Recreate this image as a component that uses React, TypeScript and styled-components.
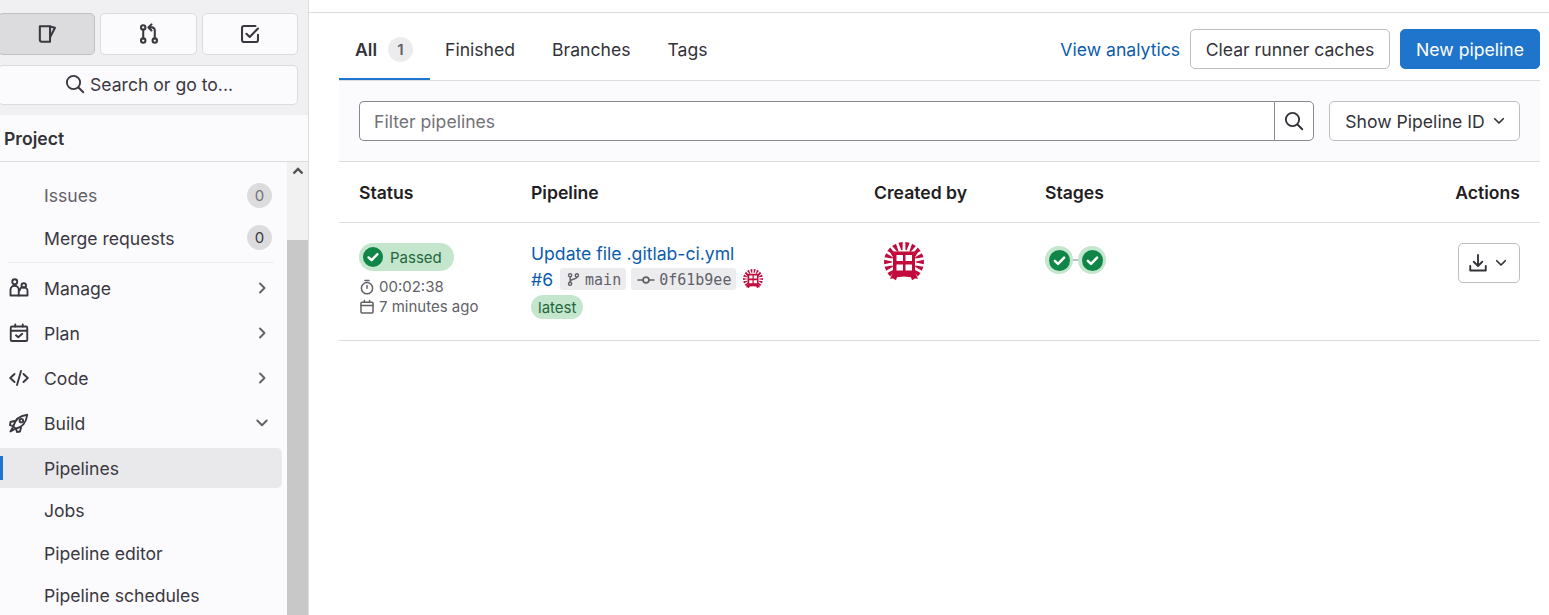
import React from "react";
import styled, { createGlobalStyle } from "styled-components";

const Global = createGlobalStyle`
  html, body { margin: 0; padding: 0; height: 100%; background: #fff; }
  body { font-family: Inter, "Noto Sans", sans-serif; font-size: 17.6px; color: #333238; overflow: hidden; }
  #root { height: 100%; }
`;

const Page = styled.div`display: flex; height: 615px; overflow: hidden;`;
const Sidebar = styled.aside`
  width: 309px; flex: none; height: 615px; background: #fbfafd; border-right: 1px solid #dcdcde;
  box-sizing: border-box; display: flex; flex-direction: column; overflow: hidden;
`;
const SideTop = styled.div`
  background: #f0f0f2; height: 115px; flex: none; box-sizing: border-box; padding: 13px 10px 0 0;
  display: flex; flex-direction: column; gap: 10px;
`;
const TopButtons = styled.div`display: grid; grid-template-columns: 97px 97px 96px; gap: 5px; margin-left: -2px;`;
const TopButton = styled.button<{ $active?: boolean }>`
  height: 42px; border-radius: 5px; padding: 0; display: flex; align-items: center; justify-content: center;
  background: ${p => (p.$active ? "#dcdcde" : "#fbfafd")};
  border: 1px solid ${p => (p.$active ? "#bfbfc3" : "#dcdcde")}; color: #3a383f;
`;
const SearchButton = styled.button`
  height: 40px; margin-left: -2px; border-radius: 5px; border: 1px solid #dcdcde; background: #fbfafd;
  display: flex; align-items: center; justify-content: center; gap: 5px; padding: 0 0 2px 2px;
  font: 400 17.6px Inter, sans-serif; color: #3a383f;
`;
const ProjectTitle = styled.div`
  height: 47px; flex: none; box-sizing: border-box; padding: 13px 0 0 4px; border-bottom: 1px solid #dcdcde;
  font-weight: 600; font-size: 17.6px; line-height: 22px; color: #333238;
`;
const SideBody = styled.div`flex: 1; display: flex; min-height: 0;`;
const NavList = styled.nav`
  flex: 1; min-width: 0; box-sizing: border-box; padding: 13px 5px 0 0; display: flex; flex-direction: column; overflow: hidden;
`;
const NavItem = styled.div<{ $active?: boolean; $muted?: boolean; $gap?: number }>`
  position: relative; flex: none; height: 40px; display: flex; align-items: center; box-sizing: border-box;
  padding-left: 9px; padding-right: 10px; border-radius: 0 5px 5px 0; margin-bottom: ${p => p.$gap ?? 5}px;
  color: ${p => (p.$muted ? "#626168" : "#3a383f")};
  background: ${p => (p.$active ? "#e9e9ec" : "transparent")};
`;
const ActiveMark = styled.span`position: absolute; left: 0; top: 8px; bottom: 8px; width: 3px; background: #1f75cb;`;
const NavIcon = styled.span`width: 20px; height: 20px; flex: none; margin-right: 15px; display: flex; color: #3a383f;`;
const NavLabel = styled.span`flex: 1; line-height: 22px; white-space: nowrap; padding-top: 2px;`;
const Count = styled.span<{ $muted?: boolean }>`
  width: 25px; height: 25px; border-radius: 50%; background: #dcdcde; font-size: 15px; text-align: center;
  line-height: 25px; color: ${p => (p.$muted ? "#737278" : "#3a383f")}; margin-right: 0;
`;
const Chevron = styled.span`width: 20px; height: 20px; display: flex; margin-right: 0; color: #626168;`;
const Divider = styled.div`height: 1px; background: #ececef; margin: 0 8px 5px 8px; flex: none;`;
const Scrollbar = styled.div`width: 21px; flex: none; background: #f1f1f1; display: flex; flex-direction: column;`;
const ScrollTop = styled.div`height: 78px; flex: none; display: flex; justify-content: center; padding-top: 5px; box-sizing: border-box;`;
const ScrollThumb = styled.div`flex: 1; background: #c8c8c8;`;

const Main = styled.main`flex: 1; min-width: 0; padding: 0 9px 0 30px; display: flex; flex-direction: column; position: relative;`;
const TopRule = styled.div`height: 1px; background: #dcdcde; margin: 12px -9px 0 -30px; flex: none;`;
const TabsRow = styled.div`
  height: 68px; box-sizing: border-box; border-bottom: 1px solid #dcdcde; display: flex; align-items: stretch; justify-content: space-between; flex: none;
`;
const Tabs = styled.div`display: flex; gap: 5px;`;
const Tab = styled.div<{ $active?: boolean }>`
  display: flex; align-items: center; gap: 11px; padding: 8px 16px 0; box-sizing: border-box; height: 67px; color: #333238;
  font-weight: ${p => (p.$active ? 600 : 400)};
  padding-right: ${p => (p.$active ? "17px" : "16px")}; margin-right: ${p => (p.$active ? "-6px" : "0")};
  border-bottom: 2px solid ${p => (p.$active ? "#1f75cb" : "transparent")};
`;
const TabCount = styled.span`
  width: 25px; height: 25px; border-radius: 50%; background: #ececef; color: #626168; font-size: 15px; font-weight: 600;
  text-align: center; line-height: 25px;
`;
const Actions = styled.div`display: flex; align-items: center; gap: 10px; padding-top: 5px;`;
const LinkText = styled.a`color: #0b5cad; text-decoration: none;`;
const Button = styled.button<{ $primary?: boolean; $w?: number }>`
  height: 40px; border-radius: 5px; box-sizing: border-box; font: 400 17.6px Inter, sans-serif; padding: 0;
  display: inline-flex; align-items: center; justify-content: center; gap: 7px;
  width: ${p => (p.$w ? `${p.$w}px` : "auto")}; flex: none;
  background: ${p => (p.$primary ? "#1f75cb" : "#fff")}; color: ${p => (p.$primary ? "#fff" : "#333238")};
  border: 1px solid ${p => (p.$primary ? "#1f75cb" : "#bfbfc3")};
`;
const ShowButton = styled(Button)`padding-left: 4px; gap: 5px;`;
const FilterBar = styled.div`
  height: 81px; box-sizing: border-box; background: #fbfafd; border-bottom: 1px solid #dcdcde; padding: 20px; display: flex; gap: 15px; flex: none;
`;
const InputGroup = styled.div`flex: 1; display: flex; min-width: 0;`;
const FilterInput = styled.div`
  flex: 1; height: 40px; box-sizing: border-box; background: #fff; border: 1px solid #89888d; border-right: 0; border-radius: 5px 0 0 5px;
  padding: 0 14px; line-height: 40px; color: #737278;
`;
const SearchIconButton = styled.button`
  width: 40px; height: 40px; background: #fff; border: 1px solid #89888d; border-radius: 0 5px 5px 0; padding: 0;
  display: flex; align-items: center; justify-content: center; color: #333238; flex: none;
`;
const gridCols = "172px 343px 171px 1fr auto";
const TableHead = styled.div`
  height: 61px; box-sizing: border-box; padding: 1px 20px 0; border-bottom: 1px solid #dcdcde; display: grid; grid-template-columns: ${gridCols};
  align-items: center; font-weight: 600; color: #1f1e24; flex: none;
`;
const HeadRight = styled.div`text-align: right;`;
const TableRow = styled.div`
  height: 118px; box-sizing: border-box; padding: 20px 20px 0; border-bottom: 1px solid #dcdcde; display: grid; grid-template-columns: ${gridCols}; flex: none;
`;
const Cell = styled.div`display: flex; flex-direction: column; align-items: flex-start; min-width: 0;`;
const CellRight = styled(Cell)`align-items: flex-end;`;
const StatusBadge = styled.span`
  height: 28px; width: 95px; border-radius: 14px; background: #c3e6cd; color: #24663b; display: flex; align-items: center; gap: 7px;
  padding-left: 4px; box-sizing: border-box; font-size: 15px; flex: none;
`;
const Meta = styled.div`display: flex; align-items: center; gap: 4px; font-size: 15px; line-height: 20px; color: #626168; white-space: nowrap;`;
const MetaFirst = styled(Meta)`margin-top: 6px;`;
const MetaIcon = styled.span`width: 16px; height: 16px; display: flex; flex: none;`;
const CommitTitle = styled.a`color: #0b5cad; text-decoration: none; line-height: 22px; margin-top: 0;`;
const RefLine = styled.div`display: flex; align-items: center; gap: 5px; height: 24px; margin-top: 2px;`;
const Pid = styled.a`color: #0b5cad; margin-right: 2px;`;
const Chip = styled.span`
  height: 22px; background: #ececef; border-radius: 3px; padding: 1px 5px 0 6px; box-sizing: border-box; display: flex; align-items: center; gap: 4px;
  font: 400 15px "DejaVu Sans Mono", monospace; color: #626168;
`;
const LatestBadge = styled.span`
  height: 24px; border-radius: 12px; background: #c3e6cd; color: #24663b; font-size: 15px; line-height: 25px; padding: 0 7px; margin-top: 4px;
`;
const AvatarWrap = styled.div`margin-left: 10px; margin-top: -1px; width: 40px; height: 40px;`;
const Stages = styled.div`display: flex; align-items: center; margin: 3px 0 0 0;`;
const StageLine = styled.span`width: 5px; height: 2px; background: #bfbfc3;`;
const Stage = styled.span`
  width: 28px; height: 28px; border-radius: 50%; background: #c3e6cd; display: flex; align-items: center; justify-content: center;
`;
const MiniAvatar = styled.span`display: flex; margin-left: 2px;`;
const ActionButton = styled(Button)`width: 62px; gap: 4px;`;

const I = ({ children, size = 20, view = 16 }: { children: React.ReactNode; size?: number; view?: number }) => (
  <svg width={size} height={size} viewBox={`0 0 ${view} ${view}`} fill="none" stroke="currentColor" strokeWidth={1.5} strokeLinecap="round" strokeLinejoin="round">{children}</svg>
);

const SearchIcon = ({ size = 20 }: { size?: number }) => (
  <I size={size}><circle cx="6.8" cy="6.8" r="5.3" /><path d="M10.8 10.8 14.6 14.6" /></I>
);
const ChevronRight = () => <I><path d="M6.4 4.4 10 8 6.4 11.6" /></I>;
const ChevronDown = ({ size = 20 }: { size?: number }) => <I size={size}><path d="M4.2 6 8 9.8 11.8 6" /></I>;

const Checkmark = ({ r }: { r: number }) => (
  <svg width={r * 2} height={r * 2} viewBox="0 0 20 20">
    <circle cx="10" cy="10" r="10" fill="#108548" />
    <path d="M5.6 10.4 8.6 13.2 14.4 7.2" fill="none" stroke="#fff" strokeWidth="2.4" strokeLinecap="round" strokeLinejoin="round" />
  </svg>
);

const Logo = ({ size }: { size: number }) => {
  const rays = Array.from({ length: 18 }, (_, i) => i);
  return (
    <svg width={size} height={size} viewBox="0 0 40 40">
      {rays.map(i => {
        const a = ((i + 0.5) / 18) * Math.PI * 2;
        if (i === 8 || i === 9) return null;
        const p = (rad: number, off: number) => {
          const t = a + off;
          return `${20 + Math.sin(t) * rad},${20 - Math.cos(t) * rad}`;
        };
        return <polygon key={i} fill="#c20a3c" points={`${p(20, -0.11)} ${p(20, 0.11)} ${p(12, 0.05)} ${p(12, -0.05)}`} />;
      })}
      <path d="M5.5 9.5 H34.5 L31 15 V30 L34 37 Q20 32 6 37 L9 30 V15 Z" fill="#c20a3c" />
      <g fill="#fff">
        <rect x="12.5" y="13" width="6.5" height="6" />
        <rect x="21.5" y="13" width="6.5" height="6" />
        <rect x="12.5" y="22.5" width="6.5" height="6" />
        <rect x="21.5" y="22.5" width="6.5" height="6" />
      </g>
    </svg>
  );
};

export default function App() {
  return (
    <Page>
      <Global />
      <Sidebar>
        <SideTop>
          <TopButtons>
            <TopButton $active>
              <I size={22}><path d="M2.8 2.4H10.2V13.6H4.2A1.4 1.4 0 0 1 2.8 12.2Z" /><path d="M10.2 2.6 13.8 3.4 10.2 10.4" /></I>
            </TopButton>
            <TopButton>
              <I size={22}><circle cx="3.8" cy="3.2" r="1.6" /><circle cx="3.8" cy="12.8" r="1.6" /><circle cx="12.2" cy="12.8" r="1.6" /><path d="M3.8 4.8V11.2" /><path d="M12.2 11.2V5.2A2 2 0 0 0 10.2 3.2H8" /><path d="M9.8 1 7.6 3.2 9.8 5.4" /></I>
            </TopButton>
            <TopButton>
              <I size={22}><path d="M13.8 8.5V12.4A1.4 1.4 0 0 1 12.4 13.8H3.6A1.4 1.4 0 0 1 2.2 12.4V3.6A1.4 1.4 0 0 1 3.6 2.2H12" /><path d="M5.4 7.8 7.8 10.2 13.8 4" /></I>
            </TopButton>
          </TopButtons>
          <SearchButton><SearchIcon />Search or go to...</SearchButton>
        </SideTop>
        <ProjectTitle>Project</ProjectTitle>
        <SideBody>
          <NavList>
            <NavItem $muted $gap={2.5}><NavIcon /><NavLabel>Issues</NavLabel><Count $muted>0</Count></NavItem>
            <NavItem $gap={4}><NavIcon /><NavLabel>Merge requests</NavLabel><Count>0</Count></NavItem>
            <Divider />
            <NavItem>
              <NavIcon><I><circle cx="4.6" cy="3" r="2" /><path d="M1.2 14V9.4A3.3 3.3 0 0 1 4.5 6.2 3.3 3.3 0 0 1 7.8 9.4V14Z" /><circle cx="11.8" cy="6" r="1.8" /><path d="M7.8 14H14.8V11A3 3 0 0 0 8.4 10" /></I></NavIcon>
              <NavLabel>Manage</NavLabel><Chevron><ChevronRight /></Chevron>
            </NavItem>
            <NavItem>
              <NavIcon><I><rect x="1.4" y="2.8" width="13.2" height="11.6" rx="1" /><path d="M1.4 6.2H14.6M5 1.2V2.8M11 1.2V2.8" /><path d="M5.6 9.8 7.4 11.4 10.6 8.6" /></I></NavIcon>
              <NavLabel>Plan</NavLabel><Chevron><ChevronRight /></Chevron>
            </NavItem>
            <NavItem>
              <NavIcon><I><path d="M4.4 4.8 1 8 4.4 11.2M11.6 4.8 15 8 11.6 11.2M9.6 2.4 6.4 13.6" /></I></NavIcon>
              <NavLabel>Code</NavLabel><Chevron><ChevronRight /></Chevron>
            </NavItem>
            <NavItem>
              <NavIcon><I><path d="M5.2 12.6 3.4 10.8C4.4 6 8.4 2.2 14.6 1.4 13.8 7.6 10 11.6 5.2 12.6Z" /><circle cx="9.9" cy="6.1" r="1.4" /><path d="M4.2 6.4 1.2 7.2 .8 9.6 3.4 10.4M9.6 11.8 8.8 14.8 6.4 15.2 5.6 12.6M2.8 12 1.2 14.8 4 13.2" /></I></NavIcon>
              <NavLabel>Build</NavLabel><Chevron><ChevronDown /></Chevron>
            </NavItem>
            <NavItem $active $gap={2.5}><ActiveMark /><NavIcon /><NavLabel>Pipelines</NavLabel></NavItem>
            <NavItem $gap={2.5}><NavIcon /><NavLabel>Jobs</NavLabel></NavItem>
            <NavItem $gap={2.5}><NavIcon /><NavLabel>Pipeline editor</NavLabel></NavItem>
            <NavItem $gap={2.5}><NavIcon /><NavLabel>Pipeline schedules</NavLabel></NavItem>
          </NavList>
          <Scrollbar>
            <ScrollTop>
              <svg width="12" height="8" viewBox="0 0 12 8"><path d="M1.5 6.5 6 2 10.5 6.5" fill="none" stroke="#505050" strokeWidth="2.4" /></svg>
            </ScrollTop>
            <ScrollThumb />
          </Scrollbar>
        </SideBody>
      </Sidebar>
      <Main>
        <TopRule />
        <TabsRow>
          <Tabs>
            <Tab $active>All<TabCount>1</TabCount></Tab>
            <Tab>Finished</Tab>
            <Tab>Branches</Tab>
            <Tab>Tags</Tab>
          </Tabs>
          <Actions>
            <LinkText>View analytics</LinkText>
            <Button $w={200}>Clear runner caches</Button>
            <Button $primary $w={140}>New pipeline</Button>
          </Actions>
        </TabsRow>
        <FilterBar>
          <InputGroup>
            <FilterInput>Filter pipelines</FilterInput>
            <SearchIconButton><SearchIcon /></SearchIconButton>
          </InputGroup>
          <ShowButton $w={191}>Show Pipeline ID <ChevronDown size={18} /></ShowButton>
        </FilterBar>
        <TableHead>
          <div>Status</div><div>Pipeline</div><div>Created by</div><div>Stages</div><HeadRight>Actions</HeadRight>
        </TableHead>
        <TableRow>
          <Cell>
            <StatusBadge><Checkmark r={10} />Passed</StatusBadge>
            <MetaFirst>
              <MetaIcon><I size={16}><circle cx="8" cy="9.2" r="5.6" /><path d="M6 1.4H10M8 6.4V9.2" /></I></MetaIcon>
              00:02:38
            </MetaFirst>
            <Meta>
              <MetaIcon><I size={16}><rect x="2" y="3.2" width="12" height="10.8" rx="1" /><path d="M2 6.6H14M5.4 1.6V3.2M10.6 1.6V3.2" /></I></MetaIcon>
              7 minutes ago
            </Meta>
          </Cell>
          <Cell>
            <CommitTitle>Update file .gitlab-ci.yml</CommitTitle>
            <RefLine>
              <Pid>#6</Pid>
              <Chip>
                <I size={15}><circle cx="4.4" cy="3.4" r="1.7" /><circle cx="4.4" cy="12.6" r="1.7" /><circle cx="11.6" cy="3.6" r="1.7" /><path d="M4.4 5.1V10.9M11.6 5.3C11.6 8 4.4 7.4 4.4 10" /></I>
                main
              </Chip>
              <Chip>
                <I size={18}><circle cx="8" cy="8" r="2.6" /><path d="M1 8H5.4M10.6 8H15" /></I>
                0f61b9ee
              </Chip>
              <MiniAvatar><Logo size={20} /></MiniAvatar>
            </RefLine>
            <LatestBadge>latest</LatestBadge>
          </Cell>
          <Cell><AvatarWrap><Logo size={40} /></AvatarWrap></Cell>
          <Cell>
            <Stages>
              <Stage><Checkmark r={10.5} /></Stage>
              <StageLine />
              <Stage><Checkmark r={10.5} /></Stage>
            </Stages>
          </Cell>
          <CellRight>
            <ActionButton>
              <I><path d="M8 1.6V10.2M4.6 7 8 10.4 11.4 7" /><path d="M1.8 10.4V14H14.2V10.4" /></I>
              <ChevronDown size={18} />
            </ActionButton>
          </CellRight>
        </TableRow>
      </Main>
    </Page>
  );
}
